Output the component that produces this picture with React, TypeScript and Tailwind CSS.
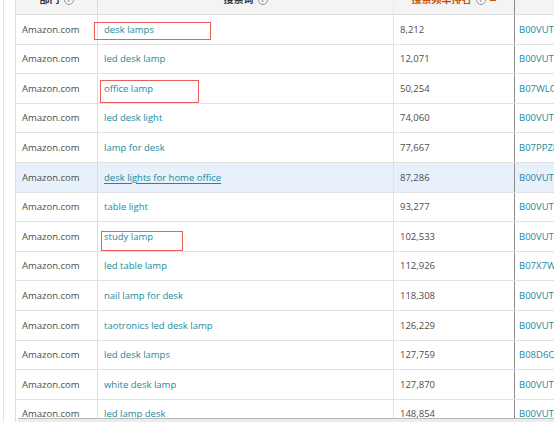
const rows = [
  { term: "desk lamps", rank: "8,212", asin: "B00VUTFG0S" },
  { term: "led desk lamp", rank: "12,071", asin: "B00VUTFG0S" },
  { term: "office lamp", rank: "50,254", asin: "B07WLCQ2MX" },
  { term: "led desk light", rank: "74,060", asin: "B00VUTFG0S" },
  { term: "lamp for desk", rank: "77,667", asin: "B07PPZ8KRV" },
  { term: "desk lights for home office", rank: "87,286", asin: "B00VUTFG0S", active: true },
  { term: "table light", rank: "93,277", asin: "B00VUTFG0S" },
  { term: "study lamp", rank: "102,533", asin: "B00VUTFG0S" },
  { term: "led table lamp", rank: "112,926", asin: "B07X7WQ3TL" },
  { term: "nail lamp for desk", rank: "118,308", asin: "B00VUTFG0S" },
  { term: "taotronics led desk lamp", rank: "126,229", asin: "B00VUTFG0S" },
  { term: "led desk lamps", rank: "127,759", asin: "B08D6CJ7QW" },
  { term: "white desk lamp", rank: "127,870", asin: "B00VUTFG0S" },
  { term: "led lamp desk", rank: "148,854", asin: "B00VUTFG0S" },
];

const font = "font-['Open_Sans','Noto_Sans_CJK_SC',sans-serif]";

function Info() {
  return (
    <span className="ml-1 inline-flex h-[10px] w-[10px] items-center justify-center rounded-full border border-[#9a9a9a] text-[7px] leading-none text-[#9a9a9a]">
      i
    </span>
  );
}

export default function App() {
  return (
    <div className={`relative h-[422px] w-[554px] overflow-hidden bg-white ${font}`}>
      <div className="flex h-full">
        <div className="w-[4px] shrink-0 border-r border-[#e3e3e3]" />
        <div className="w-[11px] shrink-0" />
        <div className="-mt-[15px] shrink-0 border-l border-[#dcdcdc]">
          <div className="flex h-[30px] border-b border-[#dcdcdc] bg-[#f4f4f4] text-[10px] font-bold text-[#333]">
            <div className="flex w-[82px] items-center justify-center border-r border-[#dcdcdc]">
              部门<Info />
            </div>
            <div className="flex w-[296px] items-center justify-center border-r border-[#ececec]">
              搜索词<Info />
            </div>
            <div className="flex w-[120px] items-center justify-center text-[#c45500]">
              搜索频率排名<Info />
              <span className="ml-1 text-[7px]">▲</span>
            </div>
            <div className="w-[120px] border-l border-[#8c8c8c]" />
          </div>
          {rows.map((r) => (
            <div
              key={r.term}
              className={`flex h-[29.6px] border-b border-[#e2e2e2] text-[9.5px] ${r.active ? "bg-[#e7f0fb]" : "bg-white"}`}
            >
              <div className="flex w-[82px] items-center border-r border-[#dcdcdc] pl-[6px] pt-[1px] text-[#4d4d4d]">
                Amazon.com
              </div>
              <div className="flex w-[296px] items-center border-r border-[#e2e2e2] pl-[6px] pt-[1px] text-[#1b8a9c]">
                <span className={r.active ? "underline underline-offset-2" : ""}>{r.term}</span>
              </div>
              <div className="flex w-[120px] items-center pl-[6px] pt-[1px] text-[#4d4d4d]">{r.rank}</div>
              <div className="flex w-[120px] items-center overflow-hidden border-l border-[#8c8c8c] pl-[4px] pt-[1px] text-[#1b8a9c]">
                {r.asin}
              </div>
            </div>
          ))}
        </div>
      </div>

      <div className="absolute left-[94px] top-[22px] h-[18px] w-[117px] border border-[#ee5b5b]" />
      <div className="absolute left-[100px] top-[80px] h-[23px] w-[99px] border border-[#ee5b5b]" />
      <div className="absolute left-[101px] top-[231px] h-[20px] w-[82px] border border-[#ee5b5b]" />

      <div className="absolute bottom-0 left-[18px] right-0 h-[4px] border-t border-[#b9b9b9] bg-[#ececec]" />
    </div>
  );
}
